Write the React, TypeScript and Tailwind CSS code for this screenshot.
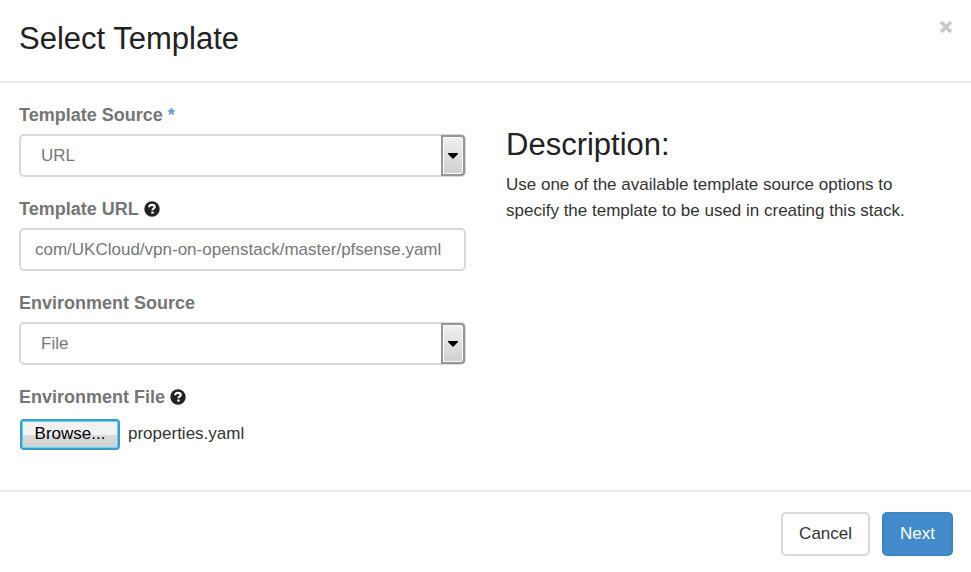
import { useRef, useState } from "react";
import type { ReactNode } from "react";

function HelpIcon() {
  return (
    <svg viewBox="0 0 16 16" className="size-4 shrink-0" aria-hidden="true">
      <circle cx="8" cy="8" r="7.7" fill="#222" />
      <path
        d="M5.200 6.300C5.200 4.500 6.400 3.800 8 3.800s2.700.9 2.700 2.200c0 1.700-2.200 1.700-2.200 3.200"
        fill="none"
        stroke="#fff"
        strokeWidth="2.200"
      />
      <rect x="7.300" y="10.500" width="2.400" height="2.100" fill="#fff" />
    </svg>
  );
}

type FieldProps = {
  id: string;
  label: string;
  required?: boolean;
  help?: boolean;
  children: ReactNode;
};

function Field({ id, label, required, help, children }: FieldProps) {
  return (
    <div>
      <label
        htmlFor={id}
        className="mb-[7px] flex items-center gap-[5px] text-[18px] leading-6 font-bold text-[#757575]"
      >
        {label}
        {required && <span className="text-[#5a9fd6]">*</span>}
        {help && <HelpIcon />}
      </label>
      {children}
    </div>
  );
}

const controlClass =
  "block h-[43px] w-full rounded-[5px] border-2 border-[#d8d8d8] bg-white text-[17px] text-[#777] outline-none";

function SelectBox({ id, options }: { id: string; options: string[] }) {
  return (
    <div className="relative">
      <select id={id} className={`${controlClass} appearance-none pr-8 pl-5`}>
        {options.map((option) => (
          <option key={option}>{option}</option>
        ))}
      </select>
      <span className="pointer-events-none absolute inset-y-px right-px flex w-6 items-center justify-center rounded-r-[4px] border-2 border-[#969696] bg-linear-to-b from-[#f1f1f1] to-[#cfcfcf] shadow-[inset_0_0_0_1px_#fafafa]">
        <svg viewBox="0 0 10 6" className="h-[6px] w-[10px]" aria-hidden="true">
          <path d="M0 0h10v1L5 6 0 1z" fill="#000" />
        </svg>
      </span>
    </div>
  );
}

export default function App() {
  const fileInput = useRef<HTMLInputElement>(null);
  const [fileName, setFileName] = useState("properties.yaml");
  const [url, setUrl] = useState("com/UKCloud/vpn-on-openstack/master/pfsense.yaml");

  return (
    <div
      role="dialog"
      aria-labelledby="dialog-title"
      className="bg-white font-['Liberation_Sans',Arial,sans-serif] text-[17px] text-[#333]"
    >
      <header className="flex items-start justify-between border-b-2 border-[#ebebeb] pt-[17px] pr-[18px] pb-5 pl-[19px]">
        <h1 id="dialog-title" className="text-[31px] leading-[44px] text-[#222]">
          Select Template
        </h1>
        <button type="button" aria-label="Close" className="flex h-5 w-[14px] items-center">
          <svg viewBox="0 0 14 14" className="size-[14px]" aria-hidden="true">
            <path d="M2 2l10 10M12 2l-10 10" stroke="#c8c8c8" strokeWidth="3.600" />
          </svg>
        </button>
      </header>

      <main className="grid grid-cols-2 gap-10 pt-5 pr-[18px] pb-[38px] pl-[19px]">
        <form className="flex flex-col gap-5">
          <Field id="template-source" label="Template Source" required>
            <SelectBox id="template-source" options={["URL", "File", "Direct Input"]} />
          </Field>
          <Field id="template-url" label="Template URL" help>
            <input
              id="template-url"
              type="text"
              value={url}
              onChange={(event) => setUrl(event.target.value)}
              className={`${controlClass} px-[14px]`}
            />
          </Field>
          <Field id="environment-source" label="Environment Source">
            <SelectBox id="environment-source" options={["File", "Direct Input"]} />
          </Field>
          <Field id="environment-file" label="Environment File" help>
            <div className="flex h-9 items-center gap-2 pl-px">
              <input
                ref={fileInput}
                id="environment-file"
                type="file"
                className="hidden"
                onChange={(event) => setFileName(event.target.files?.[0]?.name ?? "")}
              />
              <button
                type="button"
                onClick={() => fileInput.current?.click()}
                className="h-[31px] w-[100px] rounded-[4px] border-2 border-[#3c9bcb] bg-linear-to-b from-[#f2f2f2] from-50% via-[#dcdcdc] via-50% to-[#cfcfcf] text-[17px] text-black shadow-[inset_0_0_0_1px_#5fd8f5]"
              >
                Browse...
              </button>
              <span>{fileName}</span>
            </div>
          </Field>
        </form>

        <section className="pt-5 pr-6">
          <h2 className="text-[31px] leading-[44px] text-[#222]">Description:</h2>
          <p className="mt-[5px] leading-[26px]">
            Use one of the available template source options to specify the template to be used in
            creating this stack.
          </p>
        </section>
      </main>

      <footer className="flex justify-end gap-3 border-t-2 border-[#ebebeb] pt-5 pr-[18px] pb-4">
        <button
          type="button"
          className="h-11 rounded-[5px] border-2 border-[#d8d8d8] bg-white px-4 text-[17px] text-[#333]"
        >
          Cancel
        </button>
        <button
          type="button"
          className="h-11 rounded-[5px] border-2 border-[#3b85c5] bg-[#428bca] px-4 text-[17px] text-white"
        >
          Next
        </button>
      </footer>
    </div>
  );
}
